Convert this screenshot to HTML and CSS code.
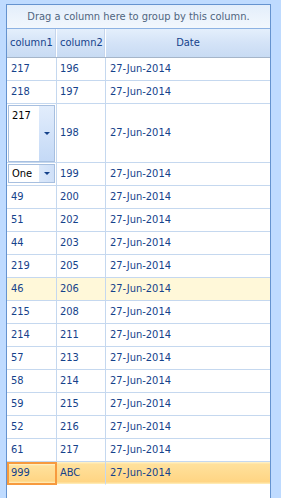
FILE: index.html
```html
<!DOCTYPE html>
<html>
<head>
<meta charset="utf-8">
<link rel="stylesheet" href="styles.css">
</head>
<body>
<div class="grid">
  <div class="group-panel">Drag a column here to group by this column.</div>
  <div class="header">
    <div class="hcell c1">column1</div>
    <div class="hcell c2">column2</div>
    <div class="hcell c3 center">Date</div>
  </div>
  <div class="rows">
    <div class="row"><div class="cell">217</div><div class="cell">196</div><div class="cell">27-Jun-2014</div></div>
    <div class="row"><div class="cell">218</div><div class="cell">197</div><div class="cell">27-Jun-2014</div></div>
    <div class="row tall">
      <div class="cell editcell">
        <div class="memo">
          <span class="memo-text">217</span>
          <span class="btn"><span class="arrow"></span></span>
        </div>
      </div>
      <div class="cell">198</div><div class="cell">27-Jun-2014</div>
    </div>
    <div class="row">
      <div class="cell editcell">
        <div class="combo">
          <span class="combo-text">One</span>
          <span class="btn"><span class="arrow"></span></span>
        </div>
      </div>
      <div class="cell">199</div><div class="cell">27-Jun-2014</div>
    </div>
    <div class="row"><div class="cell">49</div><div class="cell">200</div><div class="cell">27-Jun-2014</div></div>
    <div class="row"><div class="cell">51</div><div class="cell">202</div><div class="cell">27-Jun-2014</div></div>
    <div class="row"><div class="cell">44</div><div class="cell">203</div><div class="cell">27-Jun-2014</div></div>
    <div class="row"><div class="cell">219</div><div class="cell">205</div><div class="cell">27-Jun-2014</div></div>
    <div class="row hot"><div class="cell">46</div><div class="cell">206</div><div class="cell">27-Jun-2014</div></div>
    <div class="row"><div class="cell">215</div><div class="cell">208</div><div class="cell">27-Jun-2014</div></div>
    <div class="row"><div class="cell">214</div><div class="cell">211</div><div class="cell">27-Jun-2014</div></div>
    <div class="row"><div class="cell">57</div><div class="cell">213</div><div class="cell">27-Jun-2014</div></div>
    <div class="row"><div class="cell">58</div><div class="cell">214</div><div class="cell">27-Jun-2014</div></div>
    <div class="row"><div class="cell">59</div><div class="cell">215</div><div class="cell">27-Jun-2014</div></div>
    <div class="row"><div class="cell">52</div><div class="cell">216</div><div class="cell">27-Jun-2014</div></div>
    <div class="row"><div class="cell">61</div><div class="cell">217</div><div class="cell">27-Jun-2014</div></div>
    <div class="row focused"><div class="cell focus">999</div><div class="cell">ABC</div><div class="cell">27-Jun-2014</div></div>
  </div>
</div>
</body>
</html>
```
FILE: styles.css
```css
html, body {
  margin: 0;
  padding: 0;
  height: 100%;
  background: #bfdbff;
  overflow: hidden;
}
body {
  font-family: "DejaVu Sans Condensed", "Liberation Sans", sans-serif;
  font-size: 11px;
}
.grid {
  margin: 4px 0 0 6px;
  width: 263px;
  height: 600px;
  border: 1px solid #6593cf;
  background: #fff;
}
.group-panel {
  height: 23px;
  line-height: 23px;
  text-align: center;
  color: #4f6580;
  background: linear-gradient(#e3eefb, #f2f7fd);
  border-bottom: 1px solid #8db2e3;
}
.header {
  display: grid;
  grid-template-columns: 50px 49px 1fr;
  height: 28px;
  background: linear-gradient(#e4effc, #d4e3f7 50%, #c8dbf3);
  border-bottom: 1px solid #a5b5c9;
}
.hcell {
  line-height: 28px;
  color: #15428b;
  padding-left: 3px;
  border-right: 1px solid #fff;
  box-shadow: inset -1px 0 0 #c5d5ec;
  white-space: nowrap;
  overflow: hidden;
}
.hcell.c3 { border-right: none; box-shadow: none; }
.center { text-align: center; padding-left: 0; }
.row {
  display: grid;
  grid-template-columns: 50px 49px 1fr;
  height: 23px;
}
.row.tall { height: 59px; }
.cell {
  box-sizing: border-box;
  border-right: 1px solid #c5d8ef;
  border-bottom: 1px solid #c5d8ef;
  color: #15428b;
  line-height: 22px;
  padding-left: 4px;
  white-space: nowrap;
}
.cell:nth-child(2) { padding-left: 3px; }
.cell:last-child { border-right: none; }
.tall .cell { line-height: 58px; }
.hot .cell { background: #fff8d9; }
.focused .cell {
  background: linear-gradient(#fff3cc, #ffe19c 10%, #ffd584 90%, #fff0c0);
  border-bottom-color: #fff;
}
.focused .cell.focus {
  border: 2px solid #f79a3e;
  padding-left: 2px;
  line-height: 18px;
}
.editcell {
  padding: 1px 1px 0 1px;
  line-height: normal !important;
}
.memo, .combo {
  box-sizing: border-box;
  border: 1px solid #a7bfdf;
  background: #fff;
  display: flex;
  color: #000;
}
.memo { height: 57px; }
.combo { height: 19px; }
.memo-text, .combo-text {
  flex: 1;
  padding-left: 3px;
  overflow: hidden;
}
.memo-text { padding-top: 3px; }
.combo-text { line-height: 17px; }
.btn {
  width: 15px;
  background: linear-gradient(90deg, #dbe8fa, #cfe0f8);
  display: flex;
  align-items: center;
  justify-content: center;
}
.memo .btn { background: linear-gradient(#e2edfc, #c4d9f6); }
.arrow {
  width: 0;
  height: 0;
  border-left: 3px solid transparent;
  border-right: 3px solid transparent;
  border-top: 3px solid #15428b;
}
```
